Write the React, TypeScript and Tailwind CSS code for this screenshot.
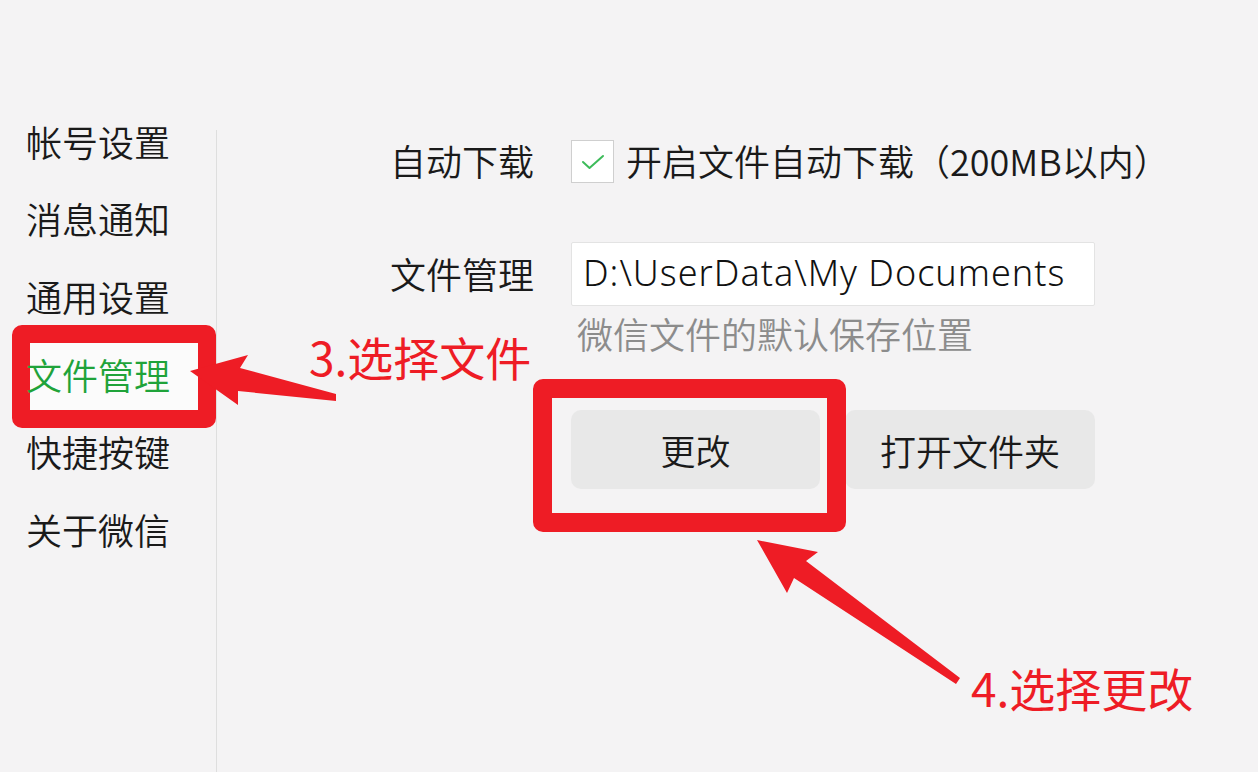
import React from "react";

const cjk = { fontFamily: '"Noto Sans CJK SC", "Noto Sans", sans-serif' };
const latin = { fontFamily: '"Noto Sans", "Noto Sans CJK SC", sans-serif' };

const navItems = ["帐号设置", "消息通知", "通用设置", "文件管理", "快捷按键", "关于微信"];

export default function App() {
  return (
    <div
      className="relative w-[1258px] h-[772px] overflow-hidden bg-[#f4f3f4] text-[#1a1a1a] flex font-[350]"
      style={cjk}
    >
      {/* annotation box behind selected nav item */}
      <div className="absolute left-[12px] top-[325px] w-[204px] h-[103px] border-[18px] border-[#ee1c25] rounded-[10px] bg-[#fbfbfb]" />

      {/* Sidebar */}
      <div className="relative w-[216px] pt-[102px] flex flex-col">
        {navItems.map((t) => (
          <div
            key={t}
            className={
              "h-[77.6px] flex items-center pl-[26px] text-[36px] leading-none " +
              (t === "文件管理" ? "text-[#1fa33a]" : "text-[#1a1a1a]")
            }
          >
            {t}
          </div>
        ))}
      </div>
      <div className="w-px mt-[130px] bg-[#dedede]" />

      {/* Main */}
      <div className="flex-1 pl-[173px] pt-[140px] flex flex-col">
        <div className="flex items-center h-[43px]">
          <div className="w-[181px] text-[36px] leading-none -mt-[3px]">自动下载</div>
          <div className="w-[43px] h-[43px] border border-[#cfcfcf] bg-white flex items-center justify-center">
            <svg width="26" height="18" viewBox="0 0 26 18" fill="none">
              <path d="M3 9 L9.5 15 L23 3" stroke="#3dbb5a" strokeWidth="2" strokeLinecap="round" strokeLinejoin="round" />
            </svg>
          </div>
          <div className="ml-[12px] -mt-[3px] text-[36px] leading-none whitespace-nowrap">开启文件自动下载（200MB以内）</div>
        </div>

        <div className="flex items-center mt-[59px] h-[64px]">
          <div className="w-[181px] text-[36px] leading-none -mt-[2px]">文件管理</div>
          <div className="w-[524px] h-[64px] bg-white border border-[#e3e3e3] rounded-[2px] flex items-center pl-[11px]">
            <span className="text-[36px] leading-none text-[#111] tracking-[1px] -mt-[2px]" style={latin}>
              D:\UserData\My Documents
            </span>
          </div>
        </div>

        <div className="ml-[187px] mt-[9px] text-[36px] leading-none text-[#8c8c8c]">微信文件的默认保存位置</div>

        <div className="ml-[181px] mt-[59px] flex gap-[25px]">
          <div className="relative z-10 w-[249px] h-[79px] rounded-[10px] bg-[#e8e8e8] flex items-center justify-center text-[35px] leading-none">
            更改
          </div>
          <div className="w-[250px] h-[79px] rounded-[10px] bg-[#e8e8e8] flex items-center justify-center text-[36px] leading-none">
            打开文件夹
          </div>
        </div>
      </div>

      {/* annotation box around 更改 */}
      <div className="absolute z-20 left-[533px] top-[379px] w-[313px] h-[153px] border-[19px] border-[#ee1c25] rounded-[10px]" />

      {/* arrows */}
      <svg className="absolute inset-0 z-20 pointer-events-none" width="1258" height="772" viewBox="0 0 1258 772">
        <polygon
          points="190,371 248,355 240,368 336,394 336,401 238,391 238,405"
          fill="#ee1c25"
          strokeLinejoin="round"
        />
        <polygon
          points="757,540 818,552 806,561 960,678 956,684 794,578 787,593"
          fill="#ee1c25"
          strokeLinejoin="round"
        />
      </svg>

      {/* annotation labels */}
      <div className="absolute z-20 left-[309px] top-[333px] text-[46px] leading-none font-normal text-[#ee1c25] whitespace-nowrap">
        3.选择文件
      </div>
      <div className="absolute z-20 left-[971px] top-[664px] text-[46px] leading-none font-normal text-[#ee1c25] whitespace-nowrap">
        4.选择更改
      </div>
    </div>
  );
}
